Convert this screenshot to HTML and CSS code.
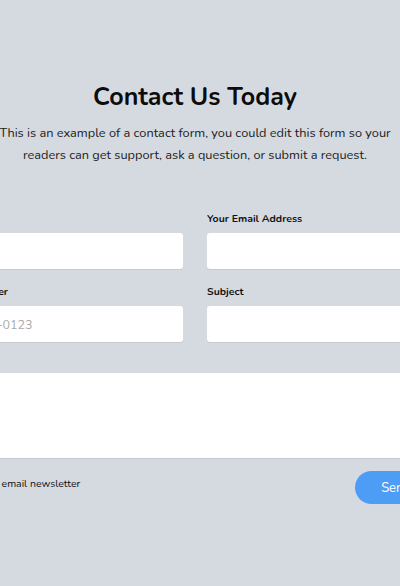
FILE: index.html
```html
<!DOCTYPE html>
<html>
<head>
<meta charset="utf-8">
<link rel="stylesheet" href="styles.css">
</head>
<body>
<div class="page">
  <header class="intro">
    <h1 class="title">Contact Us Today</h1>
    <p class="lead">This is an example of a contact form, you could edit this form so your readers can get support, ask a question, or submit a request.</p>
  </header>
  <form class="form">
    <div class="grid">
      <label class="field">
        <span class="label">Your Name</span>
        <input class="input" type="text">
      </label>
      <label class="field">
        <span class="label">Your Email Address</span>
        <input class="input" type="email">
      </label>
      <label class="field">
        <span class="label">Phone Number</span>
        <input class="input" type="text" placeholder="555-555-0123">
      </label>
      <label class="field">
        <span class="label">Subject</span>
        <input class="input" type="text">
      </label>
    </div>
    <textarea class="message"></textarea>
    <div class="actions">
      <label class="check"><input type="checkbox" class="box"> Join our email newsletter</label>
      <button type="button" class="send">Send</button>
    </div>
  </form>
</div>
</body>
</html>
```

FILE: styles.css
```css
html, body {
  margin: 0;
  padding: 0;
  width: 400px;
  height: 586px;
  overflow: hidden;
  background: #d5dae1;
}
body {
  font-family: "Nunito", "Lato", "Noto Sans", sans-serif;
  color: #111;
}
.page {
  width: 390px;
  display: flex;
  flex-direction: column;
  align-items: center;
  padding-top: 81px;
}
.intro {
  width: 400px;
  flex: none;
  text-align: center;
}
.title {
  margin: 0;
  font-size: 25px;
  line-height: 32px;
  font-weight: 700;
  color: #0c0c0c;
}
.lead {
  margin: 9px 0 0;
  font-size: 12.75px;
  line-height: 22px;
  color: #1c1c1c;
}
.form {
  width: 520px;
  flex: none;
  margin-top: 46px;
}
.grid {
  display: grid;
  grid-template-columns: 248px 248px;
  column-gap: 24px;
  row-gap: 16px;
}
.field {
  display: flex;
  flex-direction: column;
  gap: 7px;
}
.label {
  font-size: 10.5px;
  line-height: 14px;
  font-weight: 700;
  color: #111;
}
.input {
  box-sizing: border-box;
  height: 36px;
  border: none;
  border-radius: 3px;
  background: #fff;
  box-shadow: 0 1px 0 #c6cbd1;
  padding: 0 12px;
  font-family: inherit;
  font-size: 12.5px;
  color: #222;
}
.input::placeholder {
  color: #a9a9a9;
}
.message {
  display: block;
  box-sizing: border-box;
  width: 100%;
  height: 85px;
  margin-top: 31px;
  border: none;
  border-radius: 3px;
  background: #fff;
  box-shadow: 0 1px 0 #c6cbd1;
  resize: none;
}
.actions {
  display: flex;
  justify-content: space-between;
  align-items: flex-start;
  margin-top: 13px;
}
.check {
  display: flex;
  align-items: center;
  gap: 6px;
  font-size: 10.5px;
  line-height: 14px;
  color: #111;
  margin-top: 6px;
  margin-left: 9px;
}
.box {
  margin: 0;
  width: 13px;
  height: 13px;
}
.send {
  height: 33px;
  padding: 0 26px;
  margin-right: 18px;
  border: none;
  border-radius: 17px;
  background: #4d9cf5;
  color: #fff;
  font-family: inherit;
  font-size: 13px;
}
```
